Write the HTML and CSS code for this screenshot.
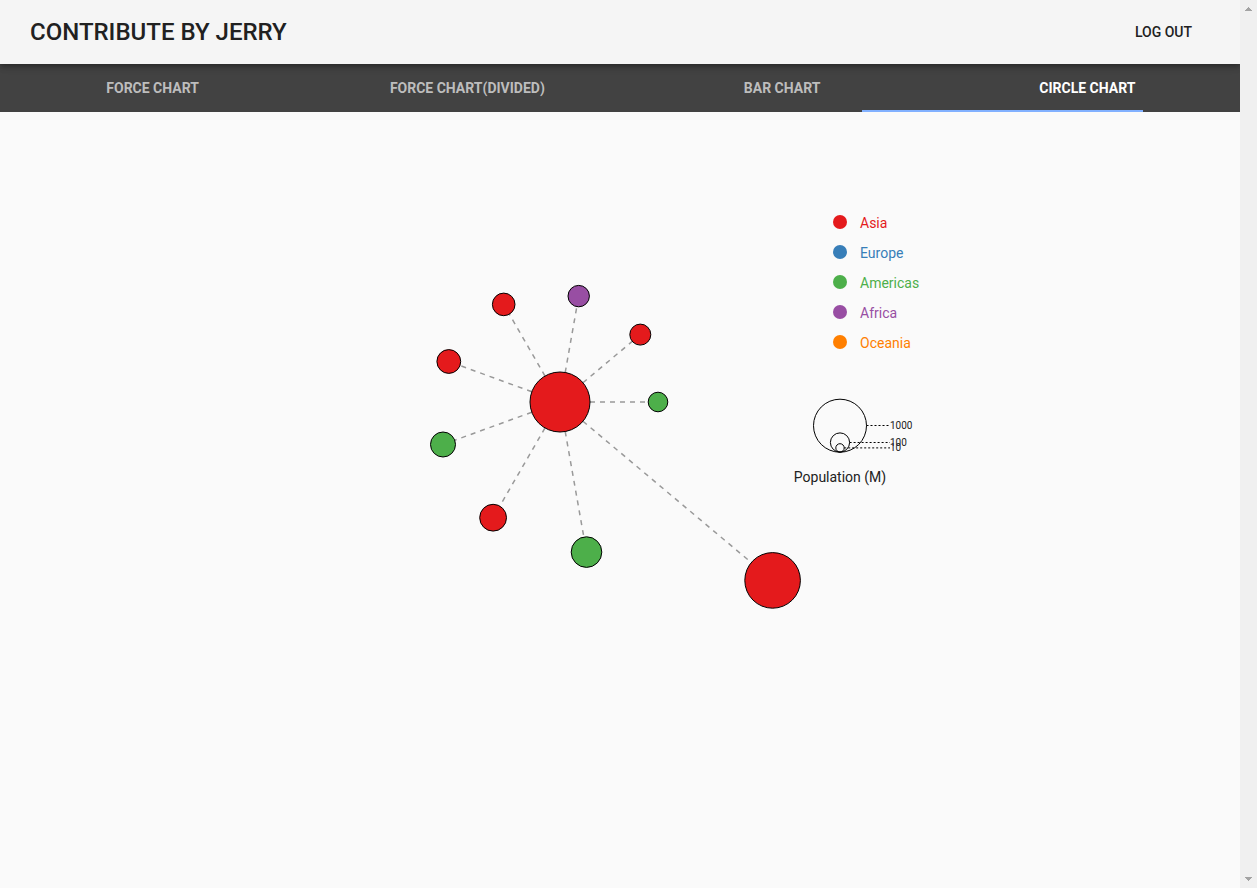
FILE: index.html
```html
<!DOCTYPE html>
<html lang="en">
<head>
<meta charset="utf-8">
<meta name="viewport" content="width=device-width, initial-scale=1">
<title>Contribute by Jerry</title>
<link rel="stylesheet" href="styles.css">
</head>
<body>
<div class="app">
  <div class="page">
    <header class="toolbar">
      <h1 class="title">CONTRIBUTE BY JERRY</h1>
      <button class="logout" type="button">LOG OUT</button>
    </header>
    <nav class="tabs">
      <a class="tab" href="#force">FORCE CHART</a>
      <a class="tab" href="#divided">FORCE CHART(DIVIDED)</a>
      <a class="tab" href="#bar">BAR CHART</a>
      <a class="tab active" href="#circle" aria-current="page">CIRCLE CHART</a>
      <span class="ink-bar"></span>
    </nav>
    <main class="content">
      <svg class="chart" viewBox="0 0 1000 700" role="img" aria-label="Population circle chart">
        <g class="links">
          <line x1="440" y1="290" x2="538" y2="290"/>
          <line x1="440" y1="290" x2="520.3" y2="222.6"/>
          <line x1="440" y1="290" x2="458.7" y2="184.1"/>
          <line x1="440" y1="290" x2="383.7" y2="192.4"/>
          <line x1="440" y1="290" x2="328.8" y2="249.5"/>
          <line x1="440" y1="290" x2="323" y2="332.5"/>
          <line x1="440" y1="290" x2="373.1" y2="405.7"/>
          <line x1="440" y1="290" x2="466.5" y2="440.1"/>
          <line x1="440" y1="290" x2="652.6" y2="468.4"/>
        </g>
        <g class="nodes">
          <circle class="asia" cx="440" cy="290" r="30"/>
          <circle class="americas" cx="538" cy="290" r="9.8"/>
          <circle class="asia" cx="520.3" cy="222.6" r="10.5"/>
          <circle class="africa" cx="458.7" cy="184.1" r="10.7"/>
          <circle class="asia" cx="383.7" cy="192.4" r="11.3"/>
          <circle class="asia" cx="328.8" cy="249.5" r="11.9"/>
          <circle class="americas" cx="323" cy="332.5" r="12.5"/>
          <circle class="asia" cx="373.1" cy="405.7" r="13.4"/>
          <circle class="americas" cx="466.5" cy="440.1" r="15.3"/>
          <circle class="asia" cx="652.6" cy="468.4" r="27.8"/>
        </g>
        <g class="legend">
          <g class="asia"><circle cx="720" cy="110" r="7"/><text x="740" y="116">Asia</text></g>
          <g class="europe"><circle cx="720" cy="140" r="7"/><text x="740" y="146">Europe</text></g>
          <g class="americas"><circle cx="720" cy="170" r="7"/><text x="740" y="176">Americas</text></g>
          <g class="africa"><circle cx="720" cy="200" r="7"/><text x="740" y="206">Africa</text></g>
          <g class="oceania"><circle cx="720" cy="230" r="7"/><text x="740" y="236">Oceania</text></g>
        </g>
        <g class="sizes">
          <circle cx="720" cy="313.7" r="26.5"/>
          <circle cx="720" cy="330.5" r="9.6"/>
          <circle cx="720" cy="335.9" r="4.2"/>
          <line x1="746.5" y1="313.5" x2="770" y2="313.5"/>
          <line x1="729.6" y1="330.5" x2="770" y2="330.5"/>
          <line x1="724.2" y1="335.9" x2="770" y2="335.9"/>
          <text x="770" y="317">1000</text>
          <text x="770" y="334">100</text>
          <text x="770" y="339">10</text>
        </g>
        <text class="caption" x="720" y="370">Population (M)</text>
      </svg>
    </main>
  </div>
  <div class="scrollbar" aria-hidden="true">
    <svg class="arrow" viewBox="0 0 17 17"><path d="M8 7h1v1h1v1h1v1h1v1H5v-1h1V9h1V8h1z"/></svg>
    <svg class="arrow" viewBox="0 0 17 17"><path d="M5 6h7v1h-1v1h-1v1H9v1H8V9H7V8H6V7H5z"/></svg>
  </div>
</div>
</body>
</html>
```
FILE: styles.css
```css
* {
  box-sizing: border-box;
}

body {
  margin: 0;
  background: #fafafa;
  color: #212121;
  font-family: Roboto, "Liberation Sans", sans-serif;
}

.app {
  display: flex;
  min-height: 100vh;
}

.page {
  flex: 1;
  min-width: 0;
  overflow: hidden;
}

.toolbar {
  position: relative;
  z-index: 1;
  display: flex;
  align-items: center;
  justify-content: space-between;
  height: 64px;
  padding: 0 48px 0 30px;
  background: #f5f5f5;
  box-shadow: 0 2px 4px -1px rgba(0, 0, 0, 0.2), 0 4px 5px 0 rgba(0, 0, 0, 0.14), 0 1px 10px 0 rgba(0, 0, 0, 0.12);
}

.title {
  margin: 0;
  font-size: 24px;
  font-weight: 500;
}

.logout {
  padding: 0;
  border: 0;
  background: none;
  color: inherit;
  font: 500 14px Roboto, "Liberation Sans", sans-serif;
}

.tabs {
  position: relative;
  display: grid;
  grid-template-columns: repeat(4, auto);
  height: 48px;
  background: #424242;
}

.tab {
  min-width: 160px;
  padding: 0 12px;
  color: #bdbdbd;
  font-size: 14px;
  font-weight: 700;
  line-height: 48px;
  text-align: center;
  text-decoration: none;
}

.tab.active {
  color: #fff;
}

.ink-bar {
  position: absolute;
  bottom: 0;
  left: 862px;
  width: 281px;
  height: 2px;
  background: #82b1ff;
}

.content {
  display: flex;
  justify-content: center;
}

.chart {
  width: 1000px;
  max-width: 100%;
}

.links {
  stroke: #999;
  stroke-width: 1.5;
  stroke-dasharray: 5 5;
}

.nodes {
  stroke: #000;
}

.asia {
  fill: #e41a1c;
}

.europe {
  fill: #377eb8;
}

.americas {
  fill: #4daf4a;
}

.africa {
  fill: #984ea3;
}

.oceania {
  fill: #ff7f00;
}

.legend,
.caption {
  font-size: 14px;
}

.caption {
  fill: #212121;
  text-anchor: middle;
}

.sizes {
  font-size: 10px;
}

.sizes circle {
  fill: none;
  stroke: #000;
}

.sizes line {
  stroke: #000;
  stroke-dasharray: 2 2;
}

.sizes text {
  fill: #212121;
}

.scrollbar {
  display: flex;
  flex-direction: column;
  justify-content: space-between;
  width: 17px;
  background: #f0f0f0;
}

.arrow {
  width: 17px;
  height: 17px;
  fill: #a3a3a3;
  shape-rendering: crispEdges;
}
```
